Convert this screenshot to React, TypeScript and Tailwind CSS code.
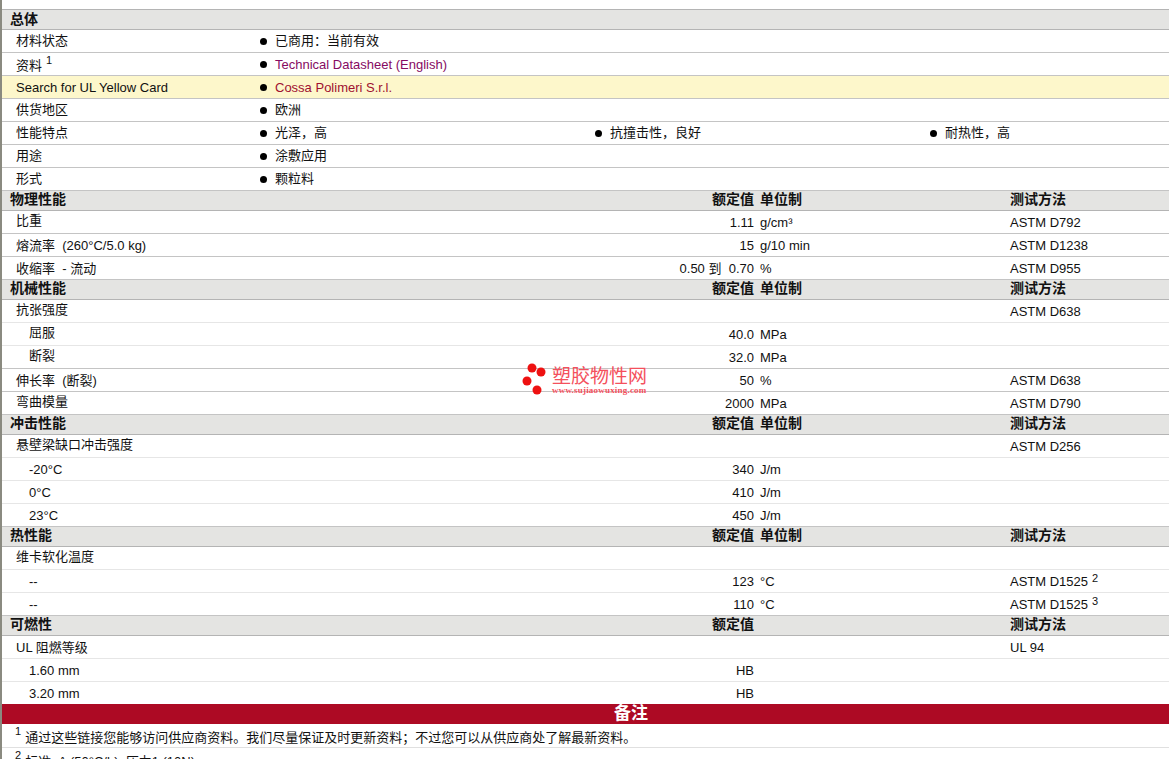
const font = "font-['Liberation_Sans','Noto_Sans_CJK_SC',sans-serif]";

type Row = {
  label: string;
  value?: string;
  unit?: string;
  method?: React.ReactNode;
  sub?: boolean;
  light?: boolean;
};

type Section = {
  title: string;
  unitHead?: boolean;
  rows: Row[];
};

const Sup = ({ n }: { n: string }) => (
  <span className="relative -top-[4px] ml-[4px] text-[11px] leading-none">{n}</span>
);

const sections: Section[] = [
  {
    title: "物理性能",
    unitHead: true,
    rows: [
      { label: "比重", value: "1.11", unit: "g/cm³", method: "ASTM D792" },
      { label: "熔流率  (260°C/5.0 kg)", value: "15", unit: "g/10 min", method: "ASTM D1238" },
      { label: "收缩率  - 流动", value: "0.50 到  0.70", unit: "%", method: "ASTM D955" },
    ],
  },
  {
    title: "机械性能",
    unitHead: true,
    rows: [
      { label: "抗张强度", method: "ASTM D638", light: true },
      { label: "屈服", value: "40.0", unit: "MPa", sub: true, light: true },
      { label: "断裂", value: "32.0", unit: "MPa", sub: true },
      { label: "伸长率  (断裂)", value: "50", unit: "%", method: "ASTM D638" },
      { label: "弯曲模量", value: "2000", unit: "MPa", method: "ASTM D790" },
    ],
  },
  {
    title: "冲击性能",
    unitHead: true,
    rows: [
      { label: "悬壁梁缺口冲击强度", method: "ASTM D256", light: true },
      { label: "-20°C", value: "340", unit: "J/m", sub: true, light: true },
      { label: "0°C", value: "410", unit: "J/m", sub: true, light: true },
      { label: "23°C", value: "450", unit: "J/m", sub: true },
    ],
  },
  {
    title: "热性能",
    unitHead: true,
    rows: [
      { label: "维卡软化温度", light: true },
      {
        label: "--",
        value: "123",
        unit: "°C",
        sub: true,
        light: true,
        method: (
          <>
            ASTM D1525
            <Sup n="2" />
          </>
        ),
      },
      {
        label: "--",
        value: "110",
        unit: "°C",
        sub: true,
        method: (
          <>
            ASTM D1525
            <Sup n="3" />
          </>
        ),
      },
    ],
  },
  {
    title: "可燃性",
    rows: [
      { label: "UL 阻燃等级", method: "UL 94", light: true },
      { label: "1.60 mm", value: "HB", sub: true, light: true },
      { label: "3.20 mm", value: "HB", sub: true },
    ],
  },
];

function Bullet({ children, className = "" }: { children: React.ReactNode; className?: string }) {
  return (
    <div className={`flex items-center ${className}`}>
      <span className="-ml-[1px] mr-[8px] h-[7px] w-[7px] rounded-full bg-black" />
      <span>{children}</span>
    </div>
  );
}

function OverviewRow({
  label,
  children,
  yellow = false,
}: {
  label: React.ReactNode;
  children: React.ReactNode;
  yellow?: boolean;
}) {
  return (
    <div
      className={`flex h-[23px] items-center whitespace-pre border-b border-[#c4c4c4] pl-[14px] ${
        yellow ? "bg-[#fdf7cb]" : ""
      }`}
    >
      <div className="w-[245px] shrink-0">{label}</div>
      {children}
    </div>
  );
}

function SectionHead({ title, unitHead }: { title: string; unitHead?: boolean }) {
  return (
    <div className="grid h-[20px] grid-cols-[752px_250px_1fr] items-center whitespace-pre border-b border-[#b4b4b4] bg-[#e4e4e2] pb-[3px] text-[14px] leading-[16px] font-bold">
      <div className="flex justify-between pl-[8px]">
        <span>{title}</span>
        <span>额定值</span>
      </div>
      <div className="pl-[6px]">{unitHead ? "单位制" : ""}</div>
      <div className="pl-[6px]">测试方法</div>
    </div>
  );
}

function DataRow({ row }: { row: Row }) {
  // plain chinese labels sit a pixel higher than the latin ones in the original
  const cjkOnly = /^[\u4e00-\u9fff]+$/.test(row.label);

  return (
    <div
      className={`grid h-[23px] grid-cols-[752px_250px_1fr] items-center whitespace-pre border-b ${
        row.light ? "border-[#e6e6e6]" : "border-[#c4c4c4]"
      }`}
    >
      <div className={`flex items-center justify-between ${row.sub ? "pl-[27px]" : "pl-[14px]"}`}>
        <span className={cjkOnly ? "pb-[2px]" : "pt-[2px]"}>{row.label}</span>
        <span className="pt-[2px]">{row.value}</span>
      </div>
      <div className="pl-[6px] pt-[2px]">{row.unit}</div>
      <div className="pl-[6px] pt-[2px]">{row.method}</div>
    </div>
  );
}

function Watermark() {
  return (
    <div className="pointer-events-none absolute left-[521px] top-[362px] flex items-start text-[#f4505c]">
      <svg width="30" height="34" viewBox="0 0 30 34">
        <circle cx="11" cy="6" r="4.5" fill="#ee1111" />
        <circle cx="20" cy="10" r="4.5" fill="#ee1111" />
        <circle cx="6" cy="19" r="4.5" fill="#ee1111" />
        <circle cx="16" cy="28" r="4.5" fill="#ee1111" />
      </svg>
      <div className="ml-[1px] flex flex-col pt-[6px]">
        <span className="text-[19px] leading-[18px]">塑胶物性网</span>
        <span className="-mt-[1px] font-['Liberation_Serif',serif] text-[9px] leading-[10px] font-bold tracking-[0.2px]">
          www.sujiaowuxing.com
        </span>
      </div>
    </div>
  );
}

export default function App() {
  return (
    <div className={`relative h-[759px] w-[1169px] overflow-hidden bg-white text-[13px] text-[#111111] ${font}`}>
      <div className="h-full border-l-2 border-[#8a8a80] pt-[9px]">
        <div className="flex h-[21px] items-center border-y border-[#b4b4b4] bg-[#e4e4e2] pl-[8px] text-[14px] font-bold">
          总体
        </div>
        <OverviewRow label="材料状态">
          <Bullet>已商用：当前有效</Bullet>
        </OverviewRow>
        <OverviewRow
          label={
            <span className="inline-flex items-center">
              <span className="pt-[4px]">资料</span>
              <Sup n="1" />
            </span>
          }
        >
          <Bullet>
            <span className="inline-block pt-[2px] text-[#860a62]">Technical Datasheet (English)</span>
          </Bullet>
        </OverviewRow>
        <OverviewRow label={<span className="inline-block pt-[2px]">Search for UL Yellow Card</span>} yellow>
          <Bullet>
            <span className="inline-block pt-[2px] text-[#a01030]">Cossa Polimeri S.r.l.</span>
          </Bullet>
        </OverviewRow>
        <OverviewRow label="供货地区">
          <Bullet>欧洲</Bullet>
        </OverviewRow>
        <OverviewRow label="性能特点">
          <Bullet className="w-[335px]">光泽，高</Bullet>
          <Bullet className="w-[335px]">抗撞击性，良好</Bullet>
          <Bullet>耐热性，高</Bullet>
        </OverviewRow>
        <OverviewRow label="用途">
          <Bullet>涂敷应用</Bullet>
        </OverviewRow>
        <OverviewRow label="形式">
          <Bullet>颗粒料</Bullet>
        </OverviewRow>

        {sections.map((section) => (
          <div key={section.title}>
            <SectionHead title={section.title} unitHead={section.unitHead} />
            {section.rows.map((row, i) => (
              <DataRow key={i} row={row} />
            ))}
          </div>
        ))}

        <div className="relative -mt-[1px] flex h-[20px] items-center bg-[#ad0a24] pl-[612px] text-[17px] font-bold text-white">
          备注
        </div>
        <div className="flex h-[24px] items-center whitespace-pre border-b border-[#e0e0e0] pl-[9px]">
          <Sup n="1" />
          <span className="ml-[4px] pt-[4px]">通过这些链接您能够访问供应商资料。我们尽量保证及时更新资料；不过您可以从供应商处了解最新资料。</span>
        </div>
        <div className="flex h-[23px] items-center whitespace-pre pl-[9px]">
          <Sup n="2" />
          <span className="ml-[4px] pt-[4px]">标准  A (50°C/h), 压力1 (10N)</span>
        </div>
      </div>
      <Watermark />
    </div>
  );
}
